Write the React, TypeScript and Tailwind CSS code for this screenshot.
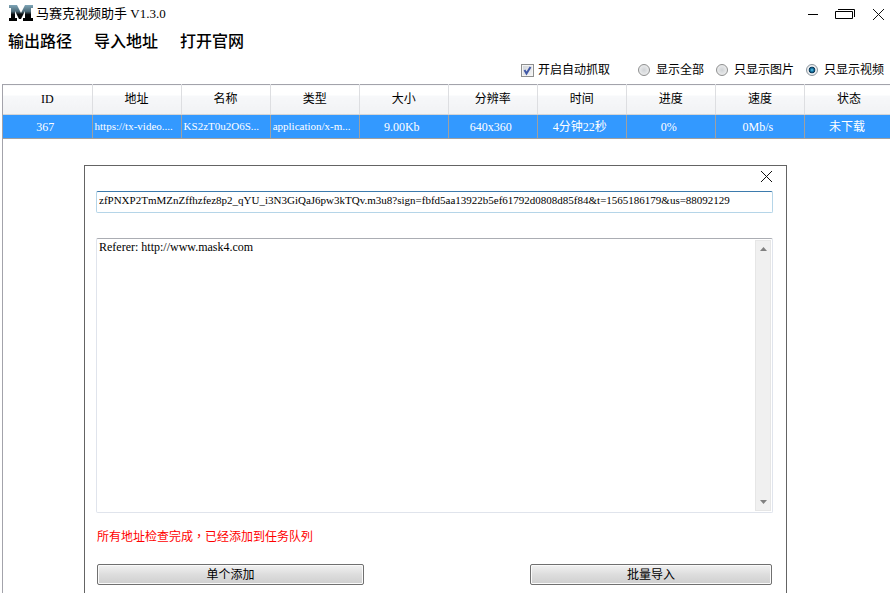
import { useState } from "react";

const menuItems = ["输出路径", "导入地址", "打开官网"];
const filters = [
  { id: "all", label: "显示全部" },
  { id: "image", label: "只显示图片" },
  { id: "video", label: "只显示视频" },
];

const columns = [
  { title: "ID", value: "367" },
  { title: "地址", value: "https://tx-video....", fill: true },
  { title: "名称", value: "KS2zT0u2O6S...", fill: true },
  { title: "类型", value: "application/x-m...", fill: true },
  { title: "大小", value: "9.00Kb" },
  { title: "分辨率", value: "640x360" },
  { title: "时间", value: "4分钟22秒" },
  { title: "进度", value: "0%" },
  { title: "速度", value: "0Mb/s" },
  { title: "状态", value: "未下载" },
];

function Logo() {
  return (
    <svg width="24" height="18" viewBox="0 0 24 18" aria-hidden="true">
      <defs>
        <linearGradient id="logo" x1="0" y1="0" x2="0" y2="1">
          <stop offset="0" stopColor="#7fa6b8" />
          <stop offset="0.4" stopColor="#4d6a78" />
          <stop offset="0.6" stopColor="#050709" />
          <stop offset="1" stopColor="#000000" />
        </linearGradient>
      </defs>
      <path
        d="M0 0H8L12 8L16 0H24V3H22V13H24V16H14V13H16V6L12 14H10L6 6V13H8V16H0V13H2V3H0Z"
        fill="url(#logo)"
      />
    </svg>
  );
}

function CloseIcon() {
  return (
    <svg width="11" height="11" viewBox="0 0 11 11" stroke="#111" strokeWidth="1" aria-hidden="true">
      <path d="M0 0L11 11M11 0L0 11" />
    </svg>
  );
}

function TitleBar() {
  return (
    <header className="flex h-7 items-center pr-1.5 pl-[9px]">
      <Logo />
      <h1 className="ml-[3px] text-[13px] leading-7 whitespace-nowrap">马赛克视频助手 V1.3.0</h1>
      <div className="ml-auto flex items-center">
        <button type="button" aria-label="Minimize" className="mr-4">
          <svg width="11" height="11" viewBox="0 0 11 11" aria-hidden="true">
            <path d="M0 5.5H10" stroke="#000" />
          </svg>
        </button>
        <button type="button" aria-label="Restore" className="mr-[17px]">
          <svg width="21" height="11" viewBox="0 0 21 11" fill="none" stroke="#000" aria-hidden="true">
            <path d="M0.5 2.5H17.5V9.5H0.5ZM3 0.5H19.5V8" />
          </svg>
        </button>
        <button type="button" aria-label="Close">
          <CloseIcon />
        </button>
      </div>
    </header>
  );
}

function FilterBar() {
  const [capture, setCapture] = useState(true);
  const [filter, setFilter] = useState("video");

  return (
    <div className="flex h-7 items-center justify-end pr-1.5 whitespace-nowrap">
      <label className="mr-7 flex items-center gap-1">
        <span className="grid">
          <input
            type="checkbox"
            checked={capture}
            onChange={(e) => setCapture(e.target.checked)}
            className="col-start-1 row-start-1 peer size-[13px] appearance-none border border-[#8e8f8f] bg-linear-to-br from-[#cfd3d8] to-[#f6f6f6] shadow-[inset_0_0_0_1px_#f4f4f4]"
          />
          <svg
            className="pointer-events-none invisible col-start-1 row-start-1 peer-checked:visible"
            width="13"
            height="13"
            viewBox="0 0 13 13"
            fill="none"
            stroke="#4158a6"
            strokeWidth="2"
            aria-hidden="true"
          >
            <path d="M3.5 6L5.5 9.5L9.5 3" />
          </svg>
        </span>
        开启自动抓取
      </label>
      <fieldset className="flex gap-3">
        {filters.map((item) => (
          <label key={item.id} className="flex items-center gap-1.5">
            <input
              type="radio"
              name="filter"
              checked={filter === item.id}
              onChange={() => setFilter(item.id)}
              className="size-3 appearance-none rounded-full border border-[#8e8f8f] bg-radial from-[#d0d3d6] to-[#f6f6f6] checked:border-[#8a949c] checked:bg-[radial-gradient(circle_at_50%_50%,#6fd0ee_0,#1c80b0_20%,#0b3554_42%,#eceef0_52%)]"
            />
            {item.label}
          </label>
        ))}
      </fieldset>
    </div>
  );
}

function TaskTable() {
  // the last column runs slightly past the window edge
  return (
    <table className="w-[calc(100%+4px)] table-fixed border-collapse text-center text-xs">
      <thead>
        <tr className="h-[30px]">
          {columns.map((column) => (
            <th
              key={column.title}
              className="border-t border-r border-b border-t-[#a3a3ab] border-r-[#dddee1] border-b-[#d5d5d5] bg-linear-to-b from-white from-35% via-[#f7f8fa] via-36% to-[#f1f2f4] p-0 pb-0.5 font-normal"
            >
              {column.title}
            </th>
          ))}
        </tr>
      </thead>
      <tbody>
        <tr className="h-6 bg-[#3399ff] text-white">
          {columns.map((column) => (
            <td
              key={column.title}
              className={`border-r border-b border-[#a0a0a0] whitespace-nowrap ${column.fill ? "p-0 pl-0.5 text-left text-[11px]" : "p-0 pr-1"}`}
            >
              {column.value}
            </td>
          ))}
        </tr>
      </tbody>
    </table>
  );
}

function PushButton({ className, children }: { className: string; children: React.ReactNode }) {
  return (
    <button
      type="button"
      className={`h-[21px] rounded-xs border border-[#707070] bg-linear-to-b from-[#f2f2f2] from-0% via-[#dddddd] via-50% to-[#cfcfcf] leading-4 shadow-[inset_0_0_0_1px_#fafafa] ${className}`}
    >
      {children}
    </button>
  );
}

function ScrollArrow({ down }: { down?: boolean }) {
  return (
    <svg width="7" height="4" viewBox="0 0 7 4" fill="#808080" aria-hidden="true">
      <path d={down ? "M0 0H7L3.5 4Z" : "M0 4H7L3.5 0Z"} />
    </svg>
  );
}

function AddDialog() {
  const [address, setAddress] = useState(
    "zfPNXP2TmMZnZffhzfez8p2_qYU_i3N3GiQaJ6pw3kTQv.m3u8?sign=fbfd5aa13922b5ef61792d0808d85f84&t=1565186179&us=88092129",
  );
  const [headers, setHeaders] = useState("Referer: http://www.mask4.com");

  return (
    <section
      role="dialog"
      aria-label="添加"
      className="mr-[103px] ml-[81px] flex grow flex-col border border-b-0 border-[#646464] bg-white pr-[13px] pl-[11px]"
    >
      <div className="flex h-[25px] items-center justify-end pr-px pb-1">
        <button type="button" aria-label="Close">
          <CloseIcon />
        </button>
      </div>
      <input
        type="text"
        aria-label="地址"
        value={address}
        onChange={(e) => setAddress(e.target.value)}
        className="h-[22px] w-full rounded-xs border border-[#b5d5e8] border-t-[#3d7bad] px-0.5 pb-1 text-[11px] outline-none"
      />
      <div className="mt-[25px] flex h-[275px] rounded-xs border border-[#e0e4ec] border-t-[#abadb3]">
        <textarea
          aria-label="Referer"
          value={headers}
          onChange={(e) => setHeaders(e.target.value)}
          className="grow resize-none overflow-hidden px-0.5 text-xs outline-none"
        />
        <div className="my-px mr-px flex w-4 flex-col items-center justify-between border border-[#e6e6e6] bg-[#f0f0f0] py-1.5">
          <ScrollArrow />
          <ScrollArrow down />
        </div>
      </div>
      <p
        lang="zh-TW"
        className="mt-4 px-px font-['Liberation_Serif','Noto_Sans_CJK_TC',serif] leading-4 text-[#ff0000]"
      >
        所有地址检查完成，已经添加到任务队列
      </p>
      <div className="mt-[19px] flex justify-between px-px">
        <PushButton className="w-[267px]">单个添加</PushButton>
        <PushButton className="w-[242px]">批量导入</PushButton>
      </div>
    </section>
  );
}

export default function App() {
  return (
    <div
      lang="zh-CN"
      className="flex min-h-screen flex-col bg-white font-['Liberation_Serif','Noto_Sans_CJK_SC',serif] text-xs text-black"
    >
      <TitleBar />
      <nav className="flex h-7 items-center gap-[22px] pl-2 text-base font-medium">
        {menuItems.map((item) => (
          <button key={item} type="button">
            {item}
          </button>
        ))}
      </nav>
      <FilterBar />
      <main className="ml-0.5 flex grow flex-col overflow-hidden border-l border-[#a3a3ab]">
        <TaskTable />
        <div className="mt-[26px] flex grow flex-col">
          <AddDialog />
        </div>
      </main>
    </div>
  );
}
